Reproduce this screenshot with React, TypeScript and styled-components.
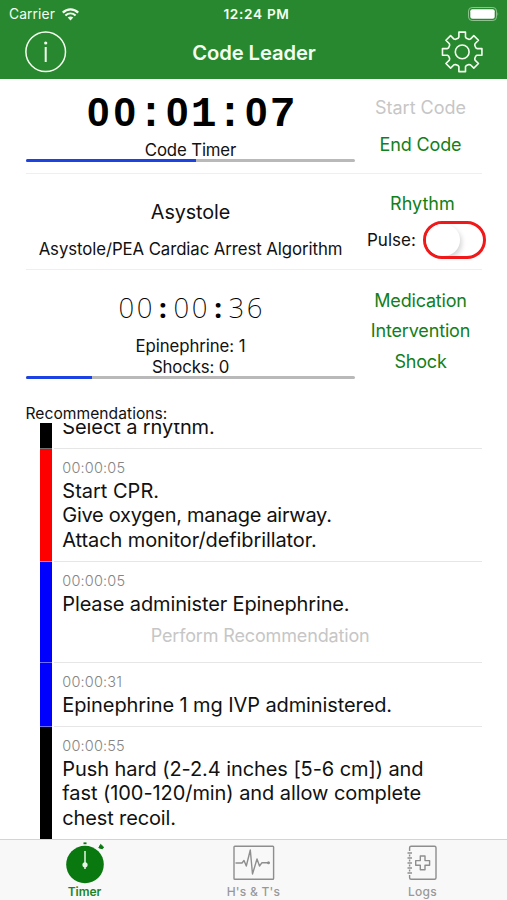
import React from 'react';
import styled, { createGlobalStyle } from 'styled-components';

const GlobalStyle = createGlobalStyle`
  * { box-sizing: border-box; }
  body { margin: 0; background: #fff; }
`;

const Screen = styled.div`
  width: 507px;
  height: 900px;
  display: flex;
  flex-direction: column;
  overflow: hidden;
  background: #fff;
  color: #111;
  font-family: Inter, 'Liberation Sans', sans-serif;
`;

const Header = styled.header`
  height: 79px;
  flex: none;
  background: #28882f;
  color: #f4fff0;
`;

const StatusBar = styled.div`
  height: 28px;
  padding: 0 8px 0 9px;
  display: grid;
  grid-template-columns: 1fr auto 1fr;
  align-items: center;
  font-size: 13.8px;
`;

const Carrier = styled.div`
  display: flex;
  align-items: center;
  gap: 7px;
  letter-spacing: 0.1px;
`;

const Clock = styled.div`
  padding-left: 5px;
  font-size: 13.6px;
  font-weight: 600;
  letter-spacing: 0.7px;
`;

const BatterySlot = styled.div`
  display: flex;
  justify-content: flex-end;
`;

const NavBar = styled.div`
  height: 48px;
  padding: 0 23px 0 24px;
  display: grid;
  grid-template-columns: 1fr auto 1fr;
  align-items: center;
`;

const IconButton = styled.button<{ $end?: boolean }>`
  border: 0;
  padding: 0;
  background: none;
  color: inherit;
  display: flex;
  justify-self: ${(p) => (p.$end ? 'end' : 'start')};
`;

const Title = styled.h1`
  margin: 0;
  font-size: 20.2px;
  line-height: 25px;
  font-weight: 600;
  letter-spacing: -0.08px;
`;

const Panel = styled.section<{ $height: number; $last?: boolean }>`
  height: ${(p) => p.$height}px;
  flex: none;
  margin: 0 25px 0 26px;
  display: grid;
  grid-template-columns: 329px 1fr;
  column-gap: 4px;
  border-bottom: 1px solid ${(p) => (p.$last ? 'transparent' : '#efefef')};
`;

const Readout = styled.div<{ $top: number }>`
  padding-top: ${(p) => p.$top}px;
  display: flex;
  flex-direction: column;
  align-items: center;
`;

const Actions = styled.div<{ $top: number; $gap: number }>`
  padding-top: ${(p) => p.$top}px;
  display: flex;
  flex-direction: column;
  align-items: center;
  gap: ${(p) => p.$gap}px;
`;

const TextButton = styled.button<{ $muted?: boolean; $tracking?: number }>`
  border: 0;
  padding: 0;
  background: none;
  font: 400 18px/22px Inter, sans-serif;
  letter-spacing: ${(p) => p.$tracking ?? -0.15}px;
  color: ${(p) => (p.$muted ? '#c6c6c6' : '#11801a')};
  white-space: nowrap;
`;

const BigClock = styled.div`
  height: 44px;
  margin-bottom: 6px;
  display: flex;
  align-items: baseline;
  font: 700 39.5px/44px 'Liberation Sans', sans-serif;
  color: #000;
`;

const BigCell = styled.span<{ $mono?: boolean }>`
  width: 26.35px;
  display: flex;
  justify-content: center;
  font-family: ${(p) => (p.$mono ? "'Liberation Mono', monospace" : "'Liberation Sans', sans-serif")};
  font-size: ${(p) => (p.$mono ? 43 : 40.5)}px;
`;

const ThinClock = styled.div`
  height: 32px;
  margin-bottom: 12px;
  display: flex;
  font: 200 27.5px/32px 'Noto Sans', sans-serif;
  color: #000;
`;

const ThinCell = styled.span<{ $bold?: boolean }>`
  width: 18.35px;
  display: flex;
  justify-content: center;
  font-weight: ${(p) => (p.$bold ? 700 : 200)};
`;

const Caption = styled.div<{ $tracking?: number }>`
  font-size: 16.8px;
  line-height: 20.6px;
  letter-spacing: ${(p) => p.$tracking ?? -0.08}px;
  white-space: nowrap;
`;

const RhythmName = styled.div`
  font-size: 19.8px;
  line-height: 24px;
  letter-spacing: -0.1px;
  margin-bottom: 14.8px;
`;

const Track = styled.div`
  align-self: stretch;
  height: 3px;
  margin-top: -0.8px;
  border-radius: 2px;
  background: #b9b9b9;
  overflow: hidden;
`;

const Fill = styled.div`
  height: 100%;
  background: #1c42e4;
`;

const PulseRow = styled.label`
  display: flex;
  align-items: center;
  gap: 7px;
  margin-left: 8px;
  font-size: 17px;
  line-height: 38px;
`;

const Switch = styled.span`
  width: 63px;
  height: 38px;
  flex: none;
  border: 3px solid #f01818;
  border-radius: 19px;
  background: #fff;
  overflow: hidden;
`;

const Thumb = styled.span`
  display: block;
  width: 34px;
  height: 32px;
  border-radius: 17px;
  background: #fff;
  box-shadow: 2px 3px 5px rgba(0, 0, 0, 0.16);
`;

const ListTitle = styled.h2`
  margin: 0 0 0 25.5px;
  height: 38px;
  flex: none;
  padding-top: 18.6px;
  font-size: 15.6px;
  line-height: 20px;
  font-weight: 400;
  letter-spacing: 0.04px;
`;

const List = styled.ul`
  list-style: none;
  flex: 1;
  min-height: 0;
  margin: 0 25px 0 40px;
  padding: 0;
  overflow: hidden;
`;

const Item = styled.li<{ $height: number }>`
  height: ${(p) => p.$height}px;
  display: flex;
`;

const Stripe = styled.div<{ $color: string }>`
  width: 12.3px;
  flex: none;
  border-bottom: 1px solid #ffffff70;
  background: ${(p) => p.$color};
`;

const ItemBody = styled.div<{ $clipped?: boolean }>`
  flex: 1;
  min-width: 0;
  margin-left: 1.5px;
  padding: ${(p) => (p.$clipped ? '0 24px 8px 8.5px' : '10px 24px 0 8.5px')};
  display: flex;
  flex-direction: column;
  justify-content: ${(p) => (p.$clipped ? 'flex-end' : 'flex-start')};
  border-bottom: 1px solid #e6e6e6;
`;

const Stamp = styled.time`
  font-size: 14.5px;
  font-weight: 300;
  line-height: 18px;
  letter-spacing: 0.17px;
  color: #858585;
  margin-bottom: 1.7px;
`;

const Line = styled.div<{ $tracking?: number }>`
  flex: none;
  font-size: 20px;
  line-height: 24.6px;
  letter-spacing: ${(p) => p.$tracking ?? -0.1}px;
  white-space: nowrap;
`;

const PerformSlot = styled.div`
  height: 39px;
  display: flex;
  align-items: center;
  justify-content: center;
`;

const TabBar = styled.nav`
  height: 61px;
  flex: none;
  display: grid;
  grid-template-columns: repeat(3, 1fr);
  border-top: 1px solid #d4d4d4;
  background: #f8f8f8;
`;

const Tab = styled.button<{ $active?: boolean }>`
  border: 0;
  padding: 0;
  background: none;
  display: flex;
  flex-direction: column;
  align-items: center;
  font: ${(p) => (p.$active ? 600 : 500)} 12px/15px Inter, sans-serif;
  letter-spacing: ${(p) => (p.$active ? 0 : 0.25)}px;
  color: ${(p) => (p.$active ? '#1c8426' : '#989898')};
`;

const WifiIcon = () => (
  <svg width="17" height="13" viewBox="0 0 17 13" fill="none" stroke="currentColor">
    <path d="M.8 4.6 C5.2.2 11.8.2 16.2 4.6" strokeWidth="2.3" />
    <path d="M3.4 7.6 C6.4 4.8 10.6 4.8 13.6 7.6" strokeWidth="2.1" />
    <path d="M8.5 12.4 L5.7 9.6 Q8.5 7.2 11.3 9.6 Z" fill="currentColor" stroke="none" />
  </svg>
);

const BatteryIcon = () => (
  <svg width="33" height="15" viewBox="0 0 33 15">
    <rect x="2.5" y=".5" width="28" height="13" rx="3.6" fill="none" stroke="#8cc48c" strokeWidth="1" />
    <rect x="4.3" y="2.3" width="24.4" height="9.4" rx="2" fill="#fff" />
    <path d="M31.5 5 Q33 7 31.5 9 Z" fill="#8cc48c" />
  </svg>
);

const InfoIcon = () => (
  <svg width="43" height="43" viewBox="0 0 43 43">
    <circle cx="21.7" cy="20.8" r="19.8" fill="none" stroke="currentColor" strokeWidth="1.5" />
    <circle cx="21.7" cy="12" r="1.6" fill="currentColor" />
    <path d="M21.7 16 V31" stroke="currentColor" strokeWidth="2" />
  </svg>
);

const TEETH = [
  [-17, 14.2],
  [-12.5, 15.2],
  [-9.5, 20],
  [9.5, 20],
  [12.5, 15.2],
  [17, 14.2],
];

const gearPath =
  Array.from({ length: 8 }, (_, i) =>
    TEETH.map(([deg, r]) => {
      const a = ((deg + i * 45) * Math.PI) / 180;
      return `${(21.2 + r * Math.sin(a)).toFixed(2)} ${(20.9 - r * Math.cos(a)).toFixed(2)}`;
    }).join(' L')
  ).reduce((d, part, i) => d + (i ? ' L' : 'M') + part, '') + ' Z';

const GearIcon = () => (
  <svg width="43" height="43" viewBox="0 0 43 43" fill="none" stroke="currentColor" strokeWidth="1.6" strokeLinejoin="round">
    <path d={gearPath} />
    <circle cx="21.2" cy="20.9" r="6.9" />
  </svg>
);

const TimerIcon = () => (
  <svg width="44" height="44" viewBox="0 0 44 44">
    <circle cx="22" cy="24.5" r="18.8" fill="#08780f" />
    <path d="M20.5 3.3 H23.5" stroke="#08780f" strokeWidth="1.8" />
    <path d="M35.8 7.8 L37.6 4.4 L40.5 7 L39.5 8.8 Z" fill="#08780f" stroke="#08780f" strokeLinejoin="round" />
    <path d="M22 11 V29" stroke="#e6f6e6" strokeWidth="1.5" />
    <circle cx="22" cy="24.8" r="2.6" fill="#e6f6e6" />
  </svg>
);

const EcgIcon = () => (
  <svg width="44" height="44" viewBox="0 0 44 44" fill="none" stroke="#8e8e8e" strokeWidth="1.4" strokeLinejoin="round">
    <rect x="2" y="6.3" width="39.6" height="33" rx="0.8" />
    <path d="M3.5 23 H10 L12 20.5 L14.3 26 L18.3 10 L20.5 34 L25 19 L27.5 26 L29.8 22.8 H36" />
    <circle cx="36.5" cy="22.8" r="0.8" fill="#8e8e8e" />
  </svg>
);

const LogIcon = () => (
  <svg width="44" height="44" viewBox="0 0 44 44" fill="none" stroke="#8e8e8e" strokeWidth="1.4" strokeLinejoin="round">
    <path d="M8.6 11 V7.8 Q8.6 6.3 10.1 6.3 H33.5 Q35 6.3 35 7.8 V37.8 Q35 39.3 33.5 39.3 H10.1 Q8.6 39.3 8.6 37.8 V35" />
    <path d="M6.5 13 H11 M6.5 18 H11 M6.5 23 H11 M6.5 28 H11 M6.5 33 H11 M8.6 14.5 V16.5 M8.6 19.5 V21.5 M8.6 24.5 V26.5 M8.6 29.5 V31.5" />
    <path d="M19.3 16 H24 V20.6 H28.6 V25.2 H24 V29.8 H19.3 V25.2 H14.7 V20.6 H19.3 Z" />
  </svg>
);

const Progress = ({ value }: { value: number }) => (
  <Track>
    <Fill style={{ width: `${value}%` }} />
  </Track>
);

type Entry = {
  color: string;
  height: number;
  time?: string;
  lines: { text: string; tracking?: number }[];
  action?: string;
};

const ENTRIES: Entry[] = [
  { color: '#000', height: 26, lines: [{ text: 'Select a rhythm.' }] },
  {
    color: '#fe0000',
    height: 113,
    time: '00:00:05',
    lines: [
      { text: 'Start CPR.', tracking: 0 },
      { text: 'Give oxygen, manage airway.', tracking: -0.28 },
      { text: 'Attach monitor/defibrillator.' },
    ],
  },
  {
    color: '#0000fe',
    height: 101,
    time: '00:00:05',
    lines: [{ text: 'Please administer Epinephrine.', tracking: -0.14 }],
    action: 'Perform Recommendation',
  },
  { color: '#0000fe', height: 64, time: '00:00:31', lines: [{ text: 'Epinephrine 1 mg IVP administered.' }] },
  {
    color: '#000',
    height: 114,
    time: '00:00:55',
    lines: [
      { text: 'Push hard (2-2.4 inches [5-6 cm]) and', tracking: -0.08 },
      { text: 'fast (100-120/min) and allow complete', tracking: -0.07 },
      { text: 'chest recoil.', tracking: -0.14 },
    ],
  },
];

export default function App() {
  return (
    <Screen>
      <GlobalStyle />
      <Header>
        <StatusBar>
          <Carrier>
            Carrier <WifiIcon />
          </Carrier>
          <Clock>12:24 PM</Clock>
          <BatterySlot>
            <BatteryIcon />
          </BatterySlot>
        </StatusBar>
        <NavBar>
          <IconButton aria-label="Info">
            <InfoIcon />
          </IconButton>
          <Title>Code Leader</Title>
          <IconButton $end aria-label="Settings">
            <GearIcon />
          </IconButton>
        </NavBar>
      </Header>

      <Panel $height={95}>
        <Readout $top={10.5}>
          <BigClock>
            {'00:01:07'.split('').map((c, i) => (
              <BigCell key={i} $mono={c !== '0'}>{c}</BigCell>
            ))}
          </BigClock>
          <Caption $tracking={-0.15}>Code Timer</Caption>
          <Progress value={51.7} />
        </Readout>
        <Actions $top={17.5} $gap={15.2}>
          <TextButton $muted $tracking={0}>Start Code</TextButton>
          <TextButton>End Code</TextButton>
        </Actions>
      </Panel>

      <Panel $height={96}>
        <Readout $top={26}>
          <RhythmName>Asystole</RhythmName>
          <Caption>Asystole/PEA Cardiac Arrest Algorithm</Caption>
        </Readout>
        <Actions $top={18.8} $gap={6.2}>
          <TextButton $tracking={0}>Rhythm</TextButton>
          <PulseRow>
            Pulse:
            <Switch>
              <Thumb />
            </Switch>
          </PulseRow>
        </Actions>
      </Panel>

      <Panel $height={115} $last>
        <Readout $top={22}>
          <ThinClock>
            {'00:00:36'.split('').map((c, i) => (
              <ThinCell key={i} $bold={c === ':'}>{c}</ThinCell>
            ))}
          </ThinClock>
          <Caption>Epinephrine: 1</Caption>
          <Caption $tracking={-0.15}>Shocks: 0</Caption>
          <Progress value={20} />
        </Readout>
        <Actions $top={19.5} $gap={8.9}>
          <TextButton $tracking={-0.2}>Medication</TextButton>
          <TextButton>Intervention</TextButton>
          <TextButton $tracking={-0.2}>Shock</TextButton>
        </Actions>
      </Panel>

      <ListTitle>Recommendations:</ListTitle>
      <List>
        {ENTRIES.map((e, i) => (
          <Item key={i} $height={e.height}>
            <Stripe $color={e.color} />
            <ItemBody $clipped={!e.time}>
              {e.time && <Stamp>{e.time}</Stamp>}
              {e.lines.map((l) => (
                <Line key={l.text} $tracking={l.tracking}>{l.text}</Line>
              ))}
              {e.action && (
                <PerformSlot>
                  <TextButton $muted>{e.action}</TextButton>
                </PerformSlot>
              )}
            </ItemBody>
          </Item>
        ))}
      </List>

      <TabBar>
        <Tab $active>
          <TimerIcon />
          Timer
        </Tab>
        <Tab>
          <EcgIcon />
          H's &amp; T's
        </Tab>
        <Tab>
          <LogIcon />
          Logs
        </Tab>
      </TabBar>
    </Screen>
  );
}
